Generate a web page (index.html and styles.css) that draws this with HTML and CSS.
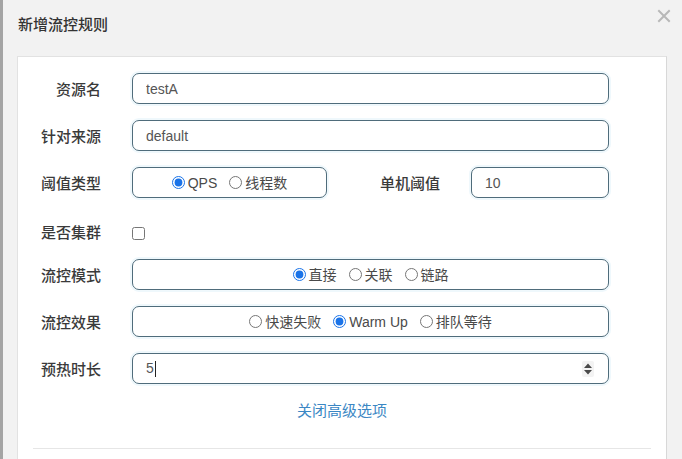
FILE: index.html
```html
<!DOCTYPE html>
<html lang="zh-CN">
<head>
<meta charset="utf-8">
<title>新增流控规则</title>
<link rel="stylesheet" href="styles.css">
</head>
<body>
<div class="dialog">
  <div class="header">
    <div class="title">新增流控规则</div>
    <div class="close" aria-label="关闭">
      <svg width="14" height="14" viewBox="0 0 14 14"><path d="M2 2 L12 12 M12 2 L2 12" stroke="#b8b8b8" stroke-width="2" stroke-linecap="square" fill="none"/></svg>
    </div>
  </div>
  <div class="panel">
    <div class="row">
      <label class="label">资源名</label>
      <input class="field wide" type="text" value="testA">
    </div>
    <div class="row">
      <label class="label">针对来源</label>
      <input class="field wide" type="text" value="default">
    </div>
    <div class="row">
      <label class="label">阈值类型</label>
      <div class="field group small">
        <label class="opt"><input type="radio" name="grade" checked>QPS</label>
        <label class="opt"><input type="radio" name="grade">线程数</label>
      </div>
      <label class="label label2">单机阈值</label>
      <input class="field count" type="text" value="10">
    </div>
    <div class="row check-row">
      <label class="label">是否集群</label>
      <input class="check" type="checkbox">
    </div>
    <div class="row">
      <label class="label">流控模式</label>
      <div class="field group wide">
        <label class="opt"><input type="radio" name="mode" checked>直接</label>
        <label class="opt"><input type="radio" name="mode">关联</label>
        <label class="opt"><input type="radio" name="mode">链路</label>
      </div>
    </div>
    <div class="row">
      <label class="label">流控效果</label>
      <div class="field group wide">
        <label class="opt"><input type="radio" name="effect">快速失败</label>
        <label class="opt"><input type="radio" name="effect" checked>Warm Up</label>
        <label class="opt"><input type="radio" name="effect">排队等待</label>
      </div>
    </div>
    <div class="row">
      <label class="label">预热时长</label>
      <div class="field wide number">
        <span class="value">5</span><span class="caret"></span>
        <span class="spin">
          <svg width="10" height="14" viewBox="0 0 10 14"><path d="M5 1.5 L9 6 L1 6 Z M1 8 L9 8 L5 12.5 Z" fill="#4a4a4a"/></svg>
        </span>
      </div>
    </div>
    <div class="more"><a class="link" href="#">关闭高级选项</a></div>
    <div class="divider"></div>
  </div>
</div>
</body>
</html>
```

FILE: styles.css
```css
html, body {
  margin: 0;
  padding: 0;
  background: #f2f2f2;
  font-family: "Liberation Sans", "Noto Sans CJK SC", sans-serif;
  color: #333;
  overflow: hidden;
}

.dialog {
  border-left: 3px solid #a4a4a4;
  height: 459px;
  box-sizing: border-box;
  overflow: hidden;
}

.header {
  display: flex;
  justify-content: space-between;
  align-items: flex-start;
  height: 56px;
  padding: 0 11px 0 15px;
}

.title {
  padding-top: 15px;
  font-size: 15px;
  line-height: 20px;
  font-weight: 500;
  color: #333;
}

.close {
  margin-top: 9px;
  width: 14px;
  height: 14px;
  line-height: 0;
}

.panel {
  margin-left: 14px;
  width: 650px;
  box-sizing: border-box;
  background: #fff;
  border: 1px solid #e2e2e2;
  border-right-color: #d8d8d8;
  padding-top: 16px;
  height: 460px;
}

.row {
  display: flex;
  align-items: stretch;
  height: 31px;
  margin-bottom: 16px;
}

.label {
  flex: 0 0 auto;
  width: 114px;
  box-sizing: border-box;
  padding-right: 31px;
  padding-top: 3px;
  text-align: right;
  font-size: 15px;
  line-height: 28px;
  font-weight: 500;
  color: #3a3a3a;
}

.label2 {
  width: 144px;
}

.field {
  box-sizing: border-box;
  height: 31px;
  border: 1px solid #4f6c7b;
  border-radius: 7px;
  box-shadow: 0 0 0 2px #eff8fc;
  background: #fff;
  padding: 0 13px;
  font-family: "Liberation Sans", "Noto Sans CJK SC", sans-serif;
  font-size: 14px;
  line-height: 29px;
  color: #555;
  outline: none;
  margin: 0;
}

.wide {
  width: 477px;
}

.small {
  width: 195px;
}

.count {
  width: 138px;
}

.group {
  display: flex;
  justify-content: center;
  align-items: center;
  gap: 12px;
  color: #444;
}

.opt {
  display: flex;
  align-items: center;
  font-size: 14px;
  line-height: 20px;
  color: #4a4a4a;
}

.opt input {
  margin: 0 3px 0 0;
  width: 13px;
  height: 13px;
  accent-color: #1a73e8;
}

.check-row {
  height: 29px;
  align-items: flex-end;
}

.check-row .label {
  padding-top: 0;
  line-height: 20px;
}

.check {
  margin: 0 0 3px 0;
  width: 13px;
  height: 13px;
}

.number {
  display: flex;
  align-items: center;
  padding-right: 14px;
}

.value {
  color: #555;
}

.caret {
  display: inline-block;
  width: 1px;
  height: 16px;
  background: #222;
  margin-left: 1px;
}

.spin {
  margin-left: auto;
  width: 12px;
  height: 16px;
  display: flex;
  align-items: center;
  justify-content: center;
  background: #f3f3f3;
  border-radius: 2px;
}

.more {
  text-align: center;
  line-height: 22px;
  font-size: 15px;
  margin-bottom: 26px;
}

.link {
  color: #3b87c4;
  text-decoration: none;
}

.divider {
  margin: 0 15px;
  border-top: 1px solid #e6e6e6;
}
```
